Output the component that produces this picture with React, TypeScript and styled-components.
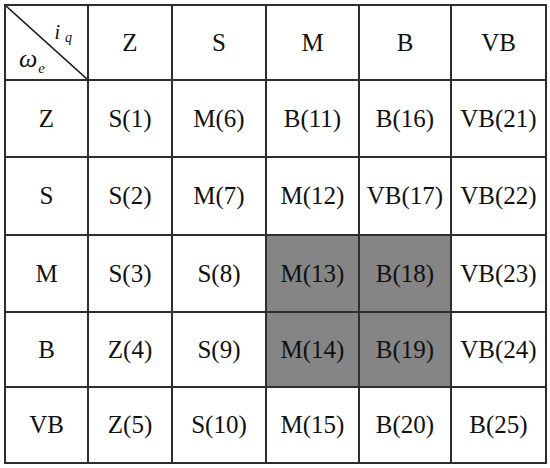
import React from "react";
import styled, { createGlobalStyle } from "styled-components";

const Global = createGlobalStyle`
  html, body { margin: 0; padding: 0; background: #ffffff; }
  body { font-family: "Liberation Serif", "Times New Roman", serif; }
`;

const Page = styled.div`
  padding: 4px;
  width: 550px;
  height: 468px;
  box-sizing: border-box;
  background: #fff;
`;

const Grid = styled.div`
  display: grid;
  grid-template-columns: 81px 82px 92px 91px 90px 93px;
  grid-template-rows: 73px 75px 76px 75px 73px 74px;
  gap: 2px;
  padding: 2px;
  background: #2e2e2e;
  width: max-content;
`;

const Cell = styled.div<{ $shade?: boolean }>`
  background: ${(p) => (p.$shade ? "#858585" : "#ffffff")};
  display: flex;
  align-items: center;
  justify-content: center;
  font-family: "Liberation Serif", "Times New Roman", serif;
  font-size: 25px;
  color: #111;
`;

const CornerCell = styled.div`
  position: relative;
  background: #fff;
  overflow: hidden;
  display: flex;
  flex-direction: column;
  gap: 4px;
  padding: 16px 15px 0 13px;
  box-sizing: border-box;
`;

const Diagonal = styled.svg`
  position: absolute;
  inset: 0;
  width: 100%;
  height: 100%;
`;

const Symbol = styled.span<{ $align: "start" | "end"; $size: number }>`
  align-self: ${(p) => (p.$align === "end" ? "flex-end" : "flex-start")};
  font-family: "Liberation Serif", "Times New Roman", serif;
  font-style: italic;
  font-size: ${(p) => p.$size}px;
  line-height: ${(p) => p.$size}px;
  height: ${(p) => p.$size}px;
  color: #111;
  white-space: nowrap;
`;

const Sub = styled.span<{ $size: number; $drop: number; $gap: number }>`
  font-size: ${(p) => p.$size}px;
  position: relative;
  top: ${(p) => p.$drop}px;
  margin-left: ${(p) => p.$gap}px;
`;

const header = ["Z", "S", "M", "B", "VB"];
const rows: { label: string; cells: string[] }[] = [
  { label: "Z", cells: ["S(1)", "M(6)", "B(11)", "B(16)", "VB(21)"] },
  { label: "S", cells: ["S(2)", "M(7)", "M(12)", "VB(17)", "VB(22)"] },
  { label: "M", cells: ["S(3)", "S(8)", "M(13)", "B(18)", "VB(23)"] },
  { label: "B", cells: ["Z(4)", "S(9)", "M(14)", "B(19)", "VB(24)"] },
  { label: "VB", cells: ["Z(5)", "S(10)", "M(15)", "B(20)", "B(25)"] },
];

const shaded = new Set(["M(13)", "B(18)", "M(14)", "B(19)"]);

export default function App() {
  return (
    <Page>
      <Global />
      <Grid>
        <CornerCell>
          <Diagonal viewBox="0 0 81 73" preserveAspectRatio="none">
            <line x1="0" y1="0" x2="81" y2="73" stroke="#1a1a1a" strokeWidth="1.6" />
          </Diagonal>
          <Symbol $align="end" $size={20}>
            i
            <Sub $size={14} $drop={3} $gap={5}>
              q
            </Sub>
          </Symbol>
          <Symbol $align="start" $size={26}>
            ω
            <Sub $size={15} $drop={6} $gap={1}>
              e
            </Sub>
          </Symbol>
        </CornerCell>
        {header.map((h) => (
          <Cell key={h}>{h}</Cell>
        ))}
        {rows.map((r) => (
          <React.Fragment key={r.label}>
            <Cell>{r.label}</Cell>
            {r.cells.map((c) => (
              <Cell key={c} $shade={shaded.has(c)}>
                {c}
              </Cell>
            ))}
          </React.Fragment>
        ))}
      </Grid>
    </Page>
  );
}
